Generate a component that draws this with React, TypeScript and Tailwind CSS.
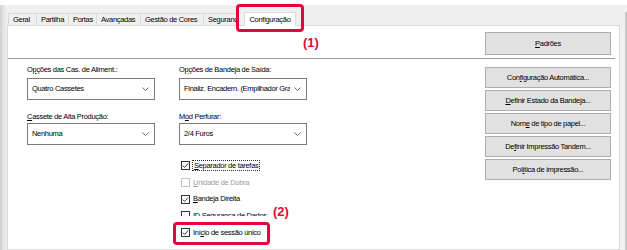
import React from 'react'

const RED = 'border-[#e5053a]'

const tabs = [
  { label: 'Geral', w: 'w-[28px]' },
  { label: 'Partilha', w: 'w-[32px]' },
  { label: 'Portas', w: 'w-[28px]' },
  { label: 'Avançadas', w: 'w-[44px]' },
  { label: 'Gestão de Cores', w: 'w-[63px]' },
  { label: 'Segurança', w: 'w-[34px]' },
]

function Chevron() {
  return (
    <svg width="7" height="4" viewBox="0 0 7 4" className="shrink-0">
      <polyline points="0.5,0.5 3.5,3.5 6.5,0.5" fill="none" stroke="#606060" strokeWidth="0.9" />
    </svg>
  )
}

function Select({ value }: { value: string }) {
  return (
    <div className="h-[22px] w-[128px] border border-[#7a7a7a] bg-white flex items-center pl-[4px] pr-[5px] gap-1">
      <span className="flex-1 whitespace-nowrap overflow-hidden">{value}</span>
      <Chevron />
    </div>
  )
}

function Box({ checked, disabled }: { checked?: boolean; disabled?: boolean }) {
  return (
    <span
      className={`w-[9px] h-[9px] shrink-0 border bg-white flex items-center justify-center ${
        disabled ? 'border-[#c4c4c4]' : 'border-[#333]'
      }`}
    >
      {checked && (
        <svg width="7" height="7" viewBox="0 0 7 7">
          <polyline points="0.8,3.6 2.6,5.4 6.2,1.4" fill="none" stroke="#222" strokeWidth="0.9" />
        </svg>
      )}
    </span>
  )
}

function Btn({ children }: { children: React.ReactNode }) {
  return (
    <div className="w-[126px] h-[21px] bg-[#e1e1e1] border border-[#adadad] flex items-center justify-center whitespace-nowrap">
      {children}
    </div>
  )
}

export default function App() {
  return (
    <div className="w-[627px] h-[250px] bg-white relative overflow-hidden flex flex-col text-[7.5px] tracking-[-0.3px] text-black font-['Liberation_Sans',Arial,sans-serif]">
      <div className="h-[5px] bg-white" />
      <div className="flex-1 flex">
        {/* left frame */}
        <div className="w-[6px] bg-gradient-to-r from-[#cfcfcf] via-[#e2e2e2] to-[#ececec]" />

        <div className="flex-1 bg-[#f0f0f0] flex flex-col pl-[1px] pr-[2px]">
          {/* tabs */}
          <div className="h-[20px] flex items-end pl-[1px]">
            {tabs.map((t) => (
              <div
                key={t.label}
                className={`${t.w} h-[12px] bg-[#f0f0f0] border-t border-l border-[#d9d9d9] flex items-center pl-[4px] whitespace-nowrap overflow-hidden`}
              >
                {t.label}
              </div>
            ))}
            <div className="w-[7px]" />
            <div className="w-[52px] h-[14px] bg-white border-t border-l border-r border-[#d9d9d9] flex items-center justify-center -mb-px relative z-10">
              Configuração
            </div>
          </div>

          {/* panel */}
          <div className="flex-1 bg-white border border-[#d9d9d9] flex flex-col">
            <div className="h-[32px] flex justify-end pt-[6px] pr-[8px]">
              <div className="w-[126px] h-[23px] bg-[#e1e1e1] border border-[#adadad] flex items-center justify-center">
                <span>
                  <u>P</u>adrões
                </span>
              </div>
            </div>
            <div className="h-px bg-[#a0a0a0] mr-[4px]" />

            <div className="flex pl-[19px] pr-[8px] pt-[6px]">
              <div className="grid grid-cols-[128px_128px] gap-x-[24px]">
                <div className="flex flex-col">
                  <div className="h-[10px] leading-[10px] whitespace-nowrap">
                    O<u>p</u>ções das Cas. de Aliment.:
                  </div>
                  <div className="mt-[3px]">
                    <Select value="Quatro Cassetes" />
                  </div>
                  <div className="h-[10px] leading-[10px] mt-[12px] whitespace-nowrap">
                    <u>C</u>assete de Alta Produção:
                  </div>
                  <div className="mt-[1px]">
                    <Select value="Nenhuma" />
                  </div>
                </div>

                <div className="flex flex-col">
                  <div className="h-[10px] leading-[10px] whitespace-nowrap">
                    Op<u>ç</u>ões de Bandeja de Saída:
                  </div>
                  <div className="mt-[3px]">
                    <Select value="Finaliz. Encadern. (Empilhador Grande)" />
                  </div>
                  <div className="h-[10px] leading-[10px] mt-[12px] whitespace-nowrap">
                    M<u>ó</u>d Perfurar:
                  </div>
                  <div className="mt-[1px]">
                    <Select value="2/4 Furos" />
                  </div>

                  <div className="flex flex-col pl-[2px] mt-[12px]">
                    <div className="h-[17px] flex items-center gap-[2px]">
                      <Box checked />
                      <span className="border border-dotted border-[#333] px-[1px] leading-[9px]">
                        <u>S</u>eparador de tarefas
                      </span>
                    </div>
                    <div className="h-[17px] flex items-center gap-[3px] text-[#a0a0a0]">
                      <Box disabled />
                      <span>
                        <u>U</u>nidade de Dobra
                      </span>
                    </div>
                    <div className="h-[16px] flex items-center gap-[3px]">
                      <Box checked />
                      <span>
                        <u>B</u>andeja Direita
                      </span>
                    </div>
                    <div className="h-[17px] flex items-center gap-[3px]">
                      <Box />
                      <span>ID Segurança de Dados</span>
                    </div>
                    <div className="h-[17px] flex items-center gap-[3px]">
                      <Box checked />
                      <span>
                        Iní<u>c</u>io de sessão único
                      </span>
                    </div>
                  </div>
                </div>
              </div>

              <div className="ml-auto flex flex-col gap-[2px] pt-[2px]">
                <Btn>
                  <span>
                    Con<u>f</u>iguração Automática...
                  </span>
                </Btn>
                <Btn>
                  <span>
                    <u>D</u>efinir Estado da Bandeja...
                  </span>
                </Btn>
                <Btn>
                  <span>
                    Nom<u>e</u> de tipo de papel...
                  </span>
                </Btn>
                <Btn>
                  <span>
                    De<u>f</u>inir Impressão Tandem...
                  </span>
                </Btn>
                <Btn>
                  <span>
                    Pol<u>í</u>tica de impressão...
                  </span>
                </Btn>
              </div>
            </div>
          </div>
        </div>

        {/* right scrollbar edge */}
        <div className="w-[5px] flex flex-col">
          <div className="h-[7px] bg-[#f0f0f0]" />
          <div className="flex-1 flex">
            <div className="w-[3px] bg-[#f0f0f0]" />
            <div className="w-[2px] bg-[#c8c8c8]" />
          </div>
        </div>
      </div>

      {/* callout (1) */}
      <div className={`absolute left-[236px] top-[4px] w-[68px] h-[28px] border-[3px] ${RED} rounded-[4px]`} />
      <div className="absolute left-[303px] top-[35px] text-[13px] leading-[15px] tracking-normal font-bold text-[#e5053a]">
        (1)
      </div>

      {/* callout (2) */}
      <div className="absolute left-[174px] top-[216px] w-[98px] h-[7px] bg-white" />
      <div className={`absolute left-[173px] top-[222px] w-[97px] h-[23px] border-[3px] ${RED} rounded-[4px]`} />
      <div className="absolute left-[273px] top-[204px] text-[13px] leading-[15px] tracking-normal font-bold text-[#e5053a]">
        (2)
      </div>
    </div>
  )
}
